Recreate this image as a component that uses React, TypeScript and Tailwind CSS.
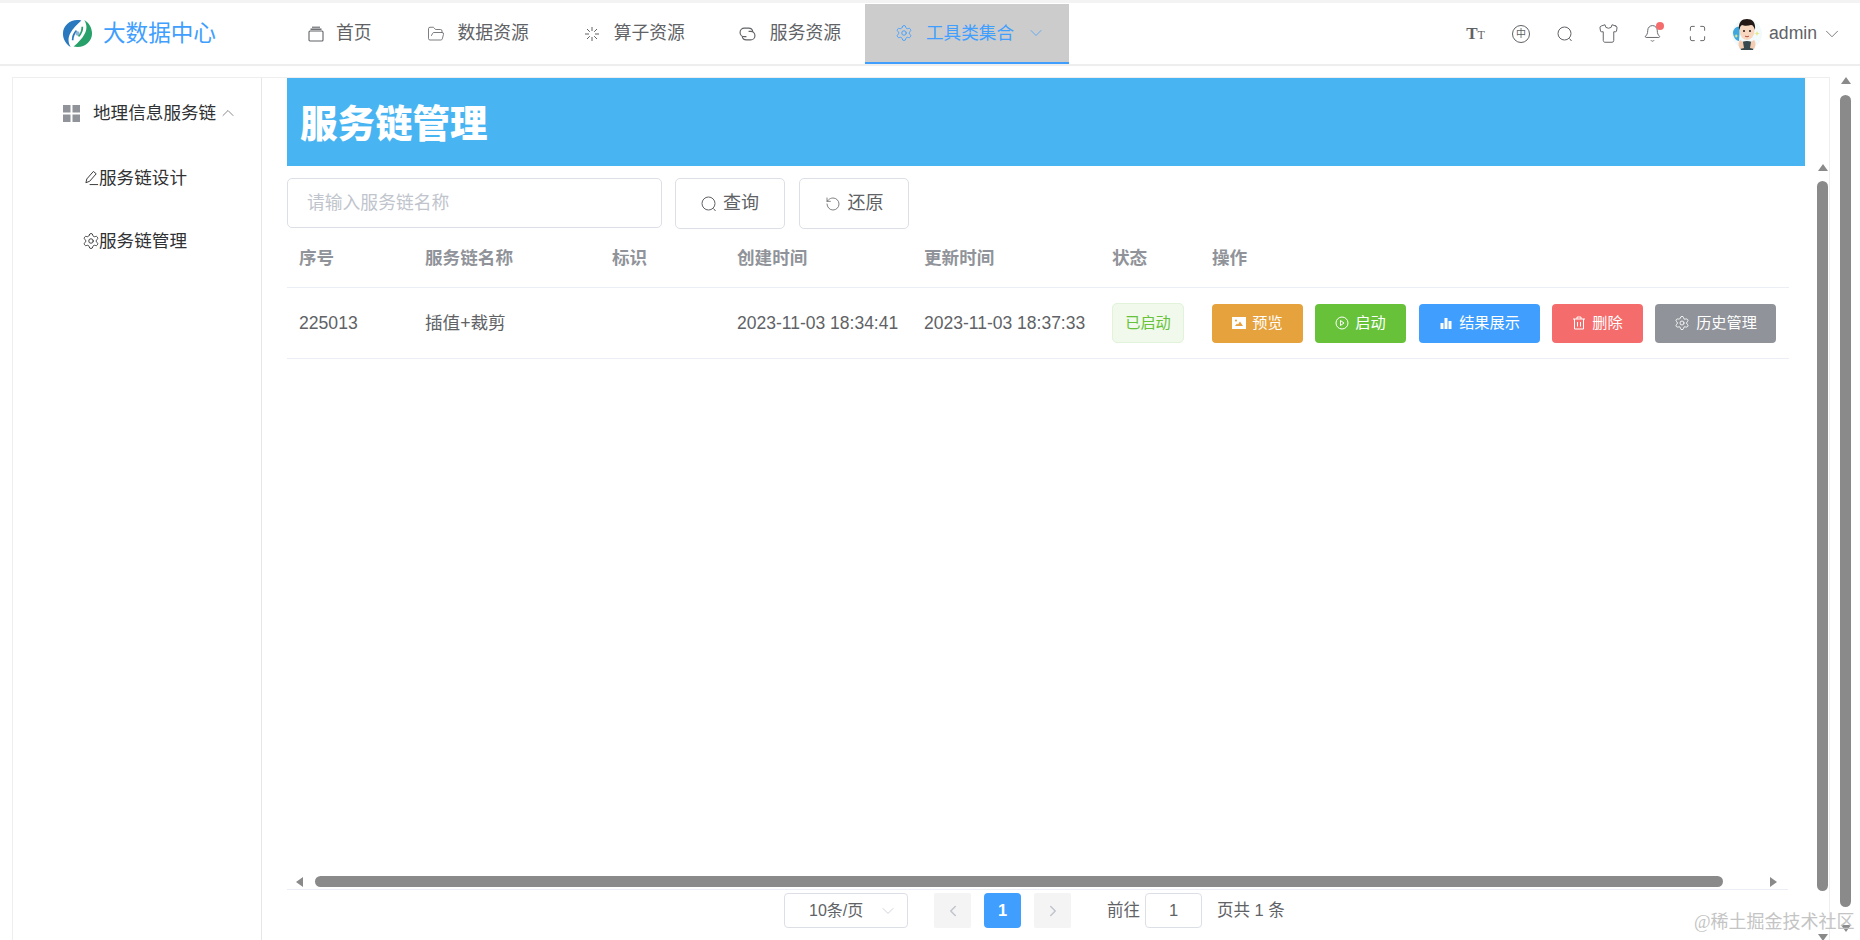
import { Bell, ChevronDown, ChevronLeft, ChevronRight, ChevronUp, FolderOpen, Maximize, RotateCw, Settings, Shirt } from 'lucide-react';

function Logo() {
  return (
    <svg viewBox="0 0 32 32" className="w-[31px] h-[31px] shrink-0">
      <path d="M20 2.500C10 0 1 7 1 16c0 6 3 11 8 14-3-5-3-10 0-15 2-4 6-8 11-12.500z" fill="#2a78bd" />
      <path d="M12 29.500c10 2.500 19-4.500 19-13.500 0-6-3-11-8-14 3 5 3 10 0 15-2 4-6 8-11 12.500z" fill="#27a06a" />
      <path d="M11 23c0-4 2-8 4-10" stroke="#2a78bd" strokeWidth="1.800" fill="none" />
      <path d="M21 9c0 4-2 8-4 10" stroke="#27a06a" strokeWidth="1.800" fill="none" />
      <circle cx="16" cy="16" r="2.200" fill="#8db4d6" />
    </svg>
  );
}

function Avatar() {
  return (
    <svg viewBox="0 0 30 32" className="w-[30px] h-[32px] shrink-0">
      <circle cx="15" cy="16" r="15" fill="#f3fafc" />
      <path d="M1 14c1-5 5-6 7-5l-1 14c-3 0-6-4-6-9z" fill="#3fa7dc" />
      <path d="M25 13l1 2 2 .5-2 .5-1 2-1-2-2-.5 2-.5zM4 16l1 1.500 1.500.5-1.500.5-1 1.500-.5-1.500L2 18l1.500-.5z" fill="#e6e98a" />
      <path d="M9 32c-2-4-1-9 6-9s8 5 6 9z" fill="#36494f" />
      <path d="M8 22l3 2 1 6-4 1c-2-3-2-7 0-9zM22 22l-3 2-1 6 4 1c2-3 2-7 0-9z" fill="#f3cdb2" />
      <ellipse cx="15" cy="13" rx="7.500" ry="9" fill="#f8d7c1" />
      <path d="M7 12C6 4 10 1 15 1s9 3 8 11c-1-3-2-5-4-5-3 1-7 1-9 0-2 1-2 3-3 5z" fill="#231815" />
      <circle cx="12" cy="13" r="1" fill="#231815" />
      <circle cx="18" cy="13" r="1" fill="#231815" />
      <path d="M13 18c1 1 3 1 4 0" stroke="#b5483a" fill="none" />
    </svg>
  );
}

function Home() {
  return (
    <svg viewBox="0 0 16 16" fill="none" stroke="#606266" strokeWidth="1.1" className="w-[16px] h-[16px]">
      <rect x="1" y="5" width="14" height="10" rx="1" />
      <path d="M2.500 3.200h11" strokeWidth="1.400" />
      <path d="M4 1.200h8" />
    </svg>
  );
}

function Spin() {
  return (
    <svg viewBox="0 0 16 16" fill="none" stroke="#606266" strokeWidth="1" className="w-[16px] h-[16px]">
      <path d="M8 1v4M8 11v4M1 8h4M11 8h4M3 3l2.800 2.800M13 3l-2.800 2.800M3 13l2.800-2.800M13 13l-2.800-2.800" />
    </svg>
  );
}

function LinkIcon() {
  return (
    <svg viewBox="0 0 16 16" fill="none" stroke="#606266" strokeWidth="1.1" className="w-[17px] h-[17px]">
      <path d="M7 11H5A4 4 0 0 1 5 3h4a4 4 0 0 1 4 3.500" />
      <path d="M9 6h2a4 4 0 0 1 0 8H7a4 4 0 0 1-4-3.500" />
    </svg>
  );
}

function SearchIcon({ className }: { className: string }) {
  return (
    <svg viewBox="0 0 16 16" fill="none" stroke="#606266" strokeWidth="1" className={className}>
      <circle cx="7.500" cy="7.500" r="6.500" />
      <path d="M12.500 12.500l2 2.500" />
    </svg>
  );
}

function Nav({ icon, text, className }: { icon: React.ReactNode; text: string; className: string }) {
  return (
    <div className={`flex items-center text-[17.8px] text-[#606266] ${className}`}>
      {icon}
      <span>{text}</span>
    </div>
  );
}

function TopIcons() {
  return (
    <div className="flex items-center text-[#606266]">
      <div className="w-[15px] flex items-baseline justify-center font-['Liberation_Serif',serif] font-bold leading-none">
        <span className="text-[17px]">T</span>
        <span className="text-[12px] font-normal">T</span>
      </div>
      <div className="ml-[29px] w-[18px] h-[18px] border border-[#606266] rounded-full flex items-center justify-center text-[10px] leading-none">
        中
      </div>
      <SearchIcon className="ml-[27px] w-[16px] h-[16px]" />
      <Shirt size={21} strokeWidth={1.1} className="ml-[25px]" />
      <div className="relative ml-[24px]">
        <Bell size={19} strokeWidth={1.2} />
        <div className="absolute -top-[2px] -right-[2px] w-[8px] h-[8px] rounded-full bg-[#f56c6c]" />
      </div>
      <Maximize size={19} strokeWidth={1.2} className="ml-[26px]" />
      <div className="ml-[25px]">
        <Avatar />
      </div>
      <span className="ml-[7px] text-[17.6px]">admin</span>
      <ChevronDown size={22} strokeWidth={0.9} className="ml-[4px]" />
    </div>
  );
}

function Header() {
  return (
    <div className="h-[63px] shrink-0 flex items-center bg-white rounded-t-xl border-b-2 border-[#eeeeee] pl-[62px] pr-[17px]">
      <Logo />
      <span className="ml-[10px] w-[205px] text-[22.6px] text-[#409eff]">大数据中心</span>
      <div className="flex items-center">
        <Nav icon={<Home />} text="首页" className="gap-[12px]" />
        <Nav icon={<FolderOpen size={18} strokeWidth={1.1} />} text="数据资源" className="ml-[55px] gap-[13px]" />
        <Nav icon={<Spin />} text="算子资源" className="ml-[55px] gap-[14px]" />
        <Nav icon={<LinkIcon />} text="服务资源" className="ml-[54px] gap-[14px]" />
      </div>
      <div className="ml-[24px] w-[204px] self-start mt-[1px] h-[60px] bg-[#cccccc] border-b-2 border-[#409eff] pl-[30px] flex items-center text-[#409eff]">
        <Settings size={18} strokeWidth={1.2} />
        <span className="ml-[13px] text-[17.6px]">工具类集合</span>
        <ChevronDown size={20} strokeWidth={0.9} className="ml-[12px]" />
      </div>
      <div className="ml-auto">
        <TopIcons />
      </div>
    </div>
  );
}

function Sidebar() {
  return (
    <div className="w-[249px] shrink-0 border-r border-[#e6e6e6] text-[17.6px] text-[#303133]">
      <div className="h-[70px] pl-[50px] flex items-center">
        <svg viewBox="0 0 17 17" fill="#909399" className="w-[17px] h-[17px]">
          <rect width="7.500" height="7.500" />
          <rect x="9.500" width="7.500" height="7.500" />
          <rect y="9.500" width="7.500" height="7.500" />
          <rect x="9.500" y="9.500" width="7.500" height="7.500" />
        </svg>
        <span className="ml-[13px]">地理信息服务链</span>
        <ChevronUp size={20} strokeWidth={0.9} className="ml-[2px] text-[#606266]" />
      </div>
      <div className="h-[60px] pl-[71px] flex items-center">
        <svg viewBox="0 0 16 16" fill="none" stroke="#303133" strokeWidth="1" className="w-[15px] h-[16px]">
          <path d="M2 13l1-4 7-8 3 2.500-7 8zM6 15h9" />
        </svg>
        <span>服务链设计</span>
      </div>
      <div className="h-[66px] pl-[69px] flex items-center">
        <Settings size={18} strokeWidth={1.2} className="-mr-[1px]" />
        <span>服务链管理</span>
      </div>
    </div>
  );
}

function Tri({ dir, className }: { dir: 'up' | 'down' | 'left' | 'right'; className?: string }) {
  const pts = { up: '5,0 10,7 0,7', down: '0,0 10,0 5,7', left: '7,0 7,10 0,5', right: '0,0 7,5 0,10' }[dir];
  const box = dir === 'up' || dir === 'down' ? '0 0 10 7' : '0 0 7 10';
  return (
    <svg viewBox={box} fill="#8a8a8a" className={className}>
      <polygon points={pts} />
    </svg>
  );
}

function Op({ color, icon, text, width }: { color: string; icon: React.ReactNode; text: string; width: string }) {
  return (
    <div className={`${color} ${width} h-[39px] rounded-[4px] text-white text-[15.2px] flex items-center justify-center gap-[6px]`}>
      {icon}
      <span>{text}</span>
    </div>
  );
}

const rowGrid = 'grid grid-cols-[126px_187px_125px_187px_188px_100px_1fr] items-center';

function Table() {
  return (
    <div className="w-[1502px] text-[17.6px]">
      <div className={`${rowGrid} h-[58px] border-b border-[#ebeef5] font-bold text-[#909399]`}>
        <div className="pl-[12px]">序号</div>
        <div className="pl-[12px]">服务链名称</div>
        <div className="pl-[12px]">标识</div>
        <div className="pl-[12px]">创建时间</div>
        <div className="pl-[12px]">更新时间</div>
        <div className="pl-[12px]">状态</div>
        <div className="pl-[12px]">操作</div>
      </div>
      <div className={`${rowGrid} h-[71px] border-b border-[#ebeef5] text-[#606266]`}>
        <div className="pl-[12px]">225013</div>
        <div className="pl-[12px]">插值+裁剪</div>
        <div className="pl-[12px]"></div>
        <div className="pl-[12px] whitespace-nowrap text-[17.5px]">2023-11-03 18:34:41</div>
        <div className="pl-[12px] whitespace-nowrap text-[17.5px]">2023-11-03 18:37:33</div>
        <div className="pl-[12px]">
          <div className="w-[72px] h-[40px] rounded-[5px] border border-[#e1f3d8] bg-[#f0f9eb] text-[#67c23a] text-[15.2px] flex items-center justify-center">
            已启动
          </div>
        </div>
        <div className="pl-[12px] flex gap-[12px]">
          <Op
            color="bg-[#e6a23c]"
            width="w-[91px]"
            text="预览"
            icon={
              <svg viewBox="0 0 14 14" className="w-[14px] h-[14px]">
                <path fill="#fff" fillRule="evenodd" d="M0 1h14v12H0zM3 10h8L8 5.500 6 8.500 5 7.500zM4 3.500a1 1 0 1 0 .01 0z" />
              </svg>
            }
          />
          <Op
            color="bg-[#67c23a]"
            width="w-[91px]"
            text="启动"
            icon={
              <svg viewBox="0 0 14 14" fill="none" stroke="#fff" className="w-[14px] h-[14px]">
                <circle cx="7" cy="7" r="6" />
                <path d="M5.500 4.500l3.500 2.500-3.500 2.500z" />
              </svg>
            }
          />
          <Op
            color="bg-[#409eff]"
            width="w-[121px] ml-[1px]"
            text="结果展示"
            icon={
              <svg viewBox="0 0 14 14" fill="#fff" className="w-[14px] h-[14px]">
                <rect x="1.500" y="7" width="3" height="6" />
                <rect x="5.500" y="2" width="3" height="11" />
                <rect x="9.500" y="5" width="3" height="8" />
              </svg>
            }
          />
          <Op
            color="bg-[#f56c6c]"
            width="w-[91px]"
            text="删除"
            icon={
              <svg viewBox="0 0 14 14" fill="none" stroke="#fff" className="w-[14px] h-[14px]">
                <path d="M1 3h12M5 3V1h4v2M2.500 3v10h9V3M5.500 6v4.500M8.500 6v4.500" />
              </svg>
            }
          />
          <Op color="bg-[#909399]" width="w-[121px]" text="历史管理" icon={<Settings size={16} strokeWidth={1.3} />} />
        </div>
      </div>
    </div>
  );
}

function Pagination() {
  return (
    <div className="h-[51px] shrink-0 border-t border-[#ebeef5] w-[1501px] flex items-start pt-[3px] text-[16.5px] text-[#606266] pl-[497px]">
      <div className="w-[124px] h-[35px] rounded-[4px] border border-[#dcdfe6] flex items-center pl-[24px] text-[16px]">
        <span>10条/页</span>
        <ChevronDown size={20} strokeWidth={0.9} className="ml-[15px] text-[#c0c4cc]" />
      </div>
      <div className="ml-[26px] w-[37px] h-[35px] rounded-[2px] bg-[#f4f4f5] flex items-center justify-center text-[#c0c4cc]">
        <ChevronLeft size={18} />
      </div>
      <div className="ml-[13px] w-[37px] h-[35px] rounded-[4px] bg-[#409eff] flex items-center justify-center text-white font-bold">
        1
      </div>
      <div className="ml-[13px] w-[37px] h-[35px] rounded-[2px] bg-[#f4f4f5] flex items-center justify-center text-[#c0c4cc]">
        <ChevronRight size={18} />
      </div>
      <span className="ml-[36px] h-[35px] flex items-center">前往</span>
      <div className="ml-[5px] w-[57px] h-[35px] rounded-[4px] border border-[#dcdfe6] flex items-center justify-center">
        1
      </div>
      <span className="ml-[15px] h-[35px] flex items-center">页共 1 条</span>
    </div>
  );
}

function HScroll() {
  return (
    <div className="w-[1501px] h-[11px] mb-[2px] shrink-0 flex items-center">
      <Tri dir="left" className="ml-[9px] w-[7px] h-[10px]" />
      <div className="ml-[12px] w-[1408px] h-[11px] rounded-full bg-[#8a8a8a]" />
      <Tri dir="right" className="ml-[47px] w-[7px] h-[10px]" />
    </div>
  );
}

function InnerScroll() {
  return (
    <div className="w-[25px] shrink-0 flex flex-col items-center pl-[10px]">
      <Tri dir="up" className="-mt-[2px] w-[10px] h-[7px] shrink-0" />
      <div className="mt-[10px] w-[11px] h-[710px] shrink-0 rounded-full bg-[#8a8a8a]" />
      <Tri dir="down" className="mt-[43px] w-[10px] h-[7px] shrink-0" />
    </div>
  );
}

function OuterScroll() {
  return (
    <div className="flex-1 flex flex-col items-center pl-[1px]">
      <Tri dir="up" className="mt-[11px] w-[10px] h-[7px] shrink-0" />
      <div className="mt-[11px] w-[11px] h-[812px] shrink-0 rounded-full bg-[#8a8a8a]" />
      <Tri dir="down" className="mt-[18px] w-[10px] h-[7px] shrink-0" />
    </div>
  );
}

export default function App() {
  return (
    <div className="relative w-[1860px] h-[940px] overflow-hidden bg-white pt-[3px] font-['Liberation_Sans','Noto_Sans_CJK_SC',sans-serif] flex flex-col">
      <div className="absolute inset-x-0 top-0 h-[3px] bg-[#f3f3f3]" />
      <Header />
      <div className="flex-1 flex min-h-0">
        <div className="mt-[11px] ml-[12px] w-[1818px] flex border-l border-t border-r border-[#eeeeee]">
          <Sidebar />
          <div className="flex-1 min-w-0 pl-[25px] flex flex-col">
            <div className="w-[1518px] h-[88px] shrink-0 bg-[#48b4f2] flex items-center pl-[13px] pt-[5px]">
              <h1 className="text-[37.5px] font-black text-white">服务链管理</h1>
            </div>
            <div className="flex-1 min-h-0 flex">
              <div className="w-[1518px] shrink-0 flex flex-col">
                <div className="pt-[12px] flex text-[18px] h-[64px] shrink-0">
                  <div className="w-[375px] h-[50px] rounded-[5px] border border-[#dcdfe6] pl-[19px] flex items-center text-[#c0c4cc] text-[17.8px]">
                    请输入服务链名称
                  </div>
                  <div className="ml-[13px] w-[110px] h-[51px] rounded-[5px] border border-[#dcdfe6] flex items-center justify-center gap-[6px] text-[#606266]">
                    <SearchIcon className="w-[16px] h-[16px]" />
                    <span>查询</span>
                  </div>
                  <div className="ml-[14px] w-[110px] h-[51px] rounded-[5px] border border-[#dcdfe6] flex items-center justify-center gap-[7px] text-[#606266]">
                    <RotateCw size={16} strokeWidth={1.2} className="-scale-x-100" />
                    <span>还原</span>
                  </div>
                </div>
                <Table />
                <div className="flex-1 min-h-0" />
                <HScroll />
                <Pagination />
              </div>
              <InnerScroll />
            </div>
          </div>
        </div>
        <OuterScroll />
      </div>
      <div className="absolute left-[1694px] top-[910px] text-[18px] leading-[24px] text-[#c4c4c4] font-['Liberation_Serif','Noto_Sans_CJK_SC',serif] whitespace-nowrap">
        @稀土掘金技术社区
      </div>
    </div>
  );
}
